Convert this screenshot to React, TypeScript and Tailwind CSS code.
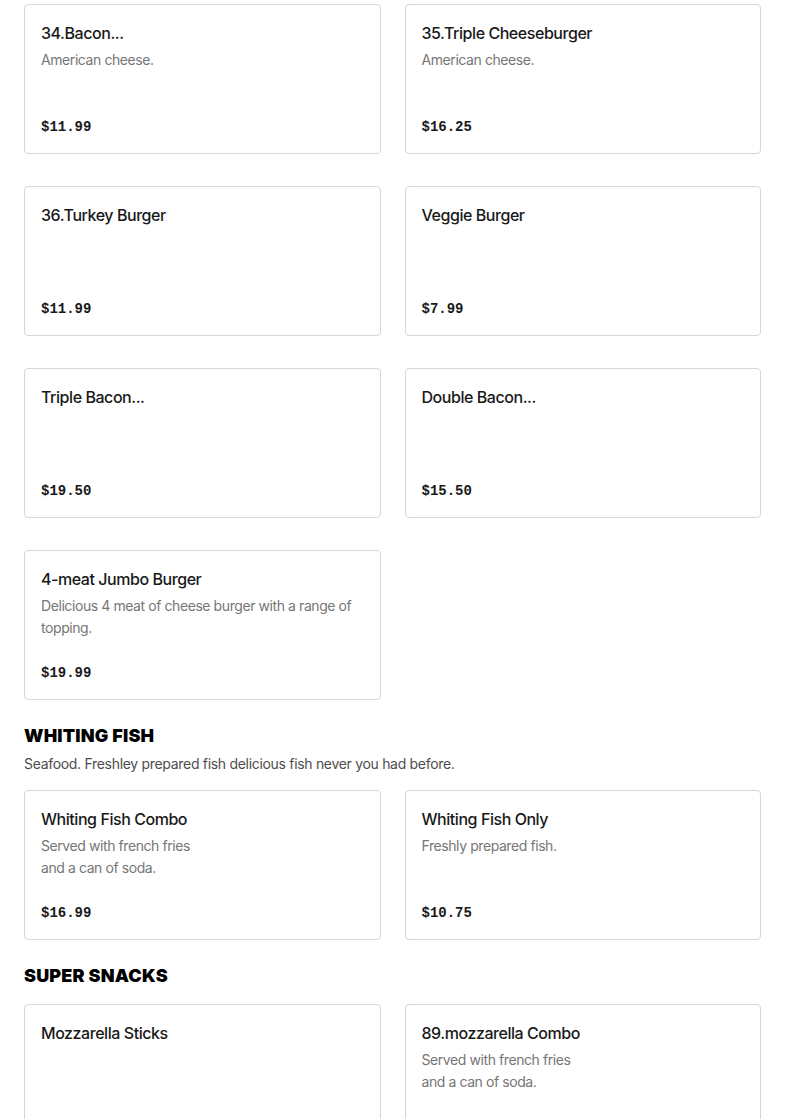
type Item = { name: string; desc?: string[]; price: string };

type Section = { title?: string; subtitle?: string; items: Item[] };

const sections: Section[] = [
  {
    items: [
      { name: "34.Bacon...", desc: ["American cheese."], price: "$11.99" },
      { name: "35.Triple Cheeseburger", desc: ["American cheese."], price: "$16.25" },
      { name: "36.Turkey Burger", price: "$11.99" },
      { name: "Veggie Burger", price: "$7.99" },
      { name: "Triple Bacon...", price: "$19.50" },
      { name: "Double Bacon...", price: "$15.50" },
      {
        name: "4-meat Jumbo Burger",
        desc: ["Delicious 4 meat of cheese burger with a range of topping."],
        price: "$19.99",
      },
    ],
  },
  {
    title: "WHITING FISH",
    subtitle: "Seafood. Freshley prepared fish delicious fish never you had before.",
    items: [
      { name: "Whiting Fish Combo", desc: ["Served with french fries", "and a can of soda."], price: "$16.99" },
      { name: "Whiting Fish Only", desc: ["Freshly prepared fish."], price: "$10.75" },
    ],
  },
  {
    title: "SUPER SNACKS",
    items: [
      { name: "Mozzarella Sticks", price: "$6.99" },
      { name: "89.mozzarella Combo", desc: ["Served with french fries", "and a can of soda."], price: "$11.99" },
    ],
  },
];

function MenuCard({ item }: { item: Item }) {
  return (
    <div className="h-[150px] rounded-[4px] border border-[#d6d6d6] bg-white px-4 pt-4 pb-4 flex flex-col">
      <h3 className="text-[16px] leading-6 font-medium tracking-[-0.028em] text-[#191919] truncate">{item.name}</h3>
      {item.desc && (
        <p className="mt-1 text-[14px] leading-[22px] tracking-[-0.03em] text-[#767676]">
          {item.desc.map((line, i) => (
            <span key={i} className="block">{line}</span>
          ))}
        </p>
      )}
      <div className="mt-auto text-[14px] leading-5 font-bold text-[#191919] font-['Liberation_Mono',monospace]">
        {item.price}
      </div>
    </div>
  );
}

export default function App() {
  return (
    <div className="min-h-screen bg-white px-6 pt-1 font-['Inter',sans-serif]">
      {sections.map((s, si) => (
        <section key={si} className={si === 0 ? "" : "mt-6"}>
          {s.title && (
            <div className={s.subtitle ? "mb-[15px]" : "mb-4"}>
              <h2 className="text-[18px] leading-6 font-black tracking-[0.01em] text-black">{s.title}</h2>
              {s.subtitle && (
                <p className="mt-[5px] text-[14px] leading-[22px] tracking-[-0.022em] text-[#4d4d4d]">{s.subtitle}</p>
              )}
            </div>
          )}
          <div className="grid grid-cols-2 gap-x-6 gap-y-8">
            {s.items.map((it, i) => (
              <MenuCard key={i} item={it} />
            ))}
          </div>
        </section>
      ))}
    </div>
  );
}
